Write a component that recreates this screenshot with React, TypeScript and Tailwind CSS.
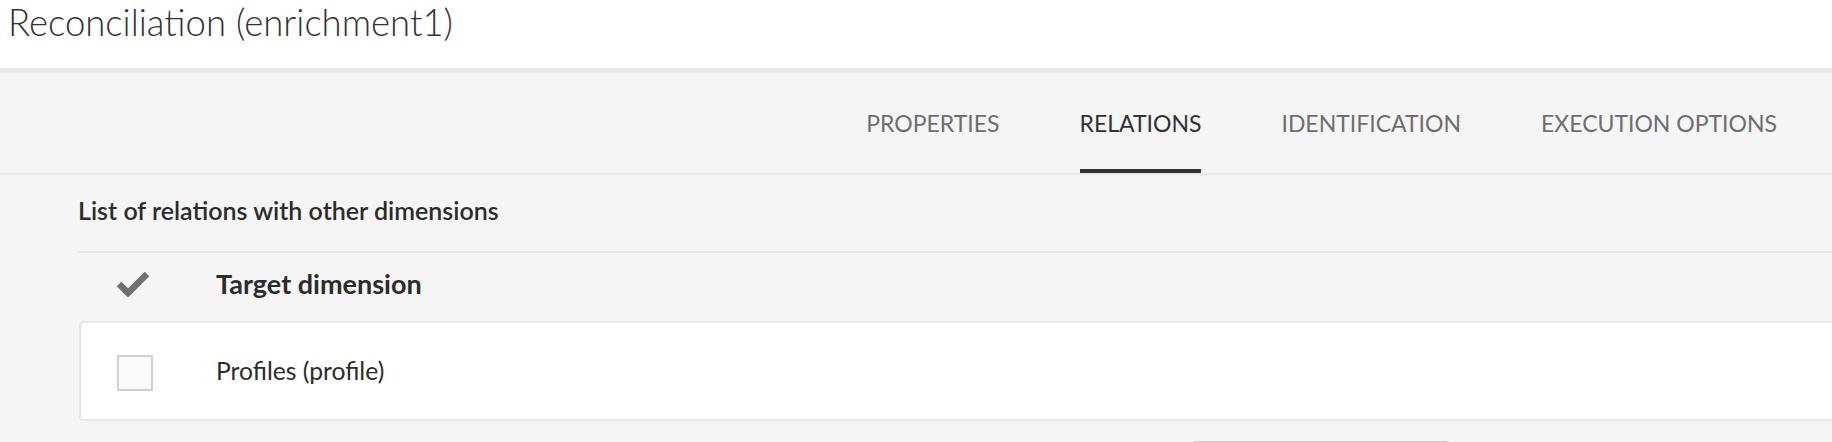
const tabs = ['PROPERTIES', 'RELATIONS', 'IDENTIFICATION', 'EXECUTION OPTIONS']

export default function App() {
  const active = 'RELATIONS'

  return (
    <div className="w-[1832px] h-[442px] overflow-hidden bg-[#f5f5f5] font-['Lato',sans-serif] text-[#2c2c2c]">
      {/* Page title */}
      <div className="h-[68px] bg-white pl-[8px]">
        <h1 className="text-[36.5px] leading-[44px] font-light text-[#323232]">Reconciliation (enrichment1)</h1>
      </div>
      <div className="h-[5px] bg-[#e8e8e8]" />

      {/* Tabs */}
      <div className="h-[102px] flex justify-end gap-[80px] pr-[55px] border-b-2 border-[#e8e8e8]">
        {tabs.map((tab) => (
          <div
            key={tab}
            className={
              tab === active
                ? 'h-full flex items-center border-y-4 border-t-transparent border-b-[#323232] text-[23px] text-[#323232]'
                : 'h-full flex items-center border-y-4 border-transparent text-[23px] text-[#6e6e6e]'
            }
          >
            {tab}
          </div>
        ))}
      </div>

      {/* Relations list */}
      <div className="pl-[78px]">
        <h2 className="mt-[20px] text-[25px] leading-[30px] font-semibold text-[#2c2c2c]">
          List of relations with other dimensions
        </h2>
        <div className="mt-[26px] h-[2px] bg-[#e8e8e8]" />

        <div className="h-[68px] flex items-center pb-[6px]">
          <div className="w-[138px] pl-[39px]">
            <svg width="33" height="26" viewBox="0 0 33 26">
              <polyline points="2,13 11,22 30,3" fill="none" stroke="#707070" strokeWidth="6.5" strokeLinejoin="miter" />
            </svg>
          </div>
          <span className="text-[27px] font-bold text-[#2c2c2c]">Target dimension</span>
        </div>

        <div className="-mr-4 ml-px h-[100px] flex items-center bg-white border-2 border-[#e6e6e6] rounded-[5px] pl-[36px]">
          <div className="w-[36px] h-[36px] mt-[4px] border-2 border-[#d0d0d0] bg-[#fafafa]" />
          <span className="ml-[63px] text-[24.7px] text-[#2c2c2c]">Profiles (profile)</span>
        </div>

        <button className="mt-[20px] ml-[1114px] w-[258px] h-[40px] border-2 border-[#cacaca] rounded-[4px] bg-[#f0f0f0]" />
      </div>
    </div>
  )
}
